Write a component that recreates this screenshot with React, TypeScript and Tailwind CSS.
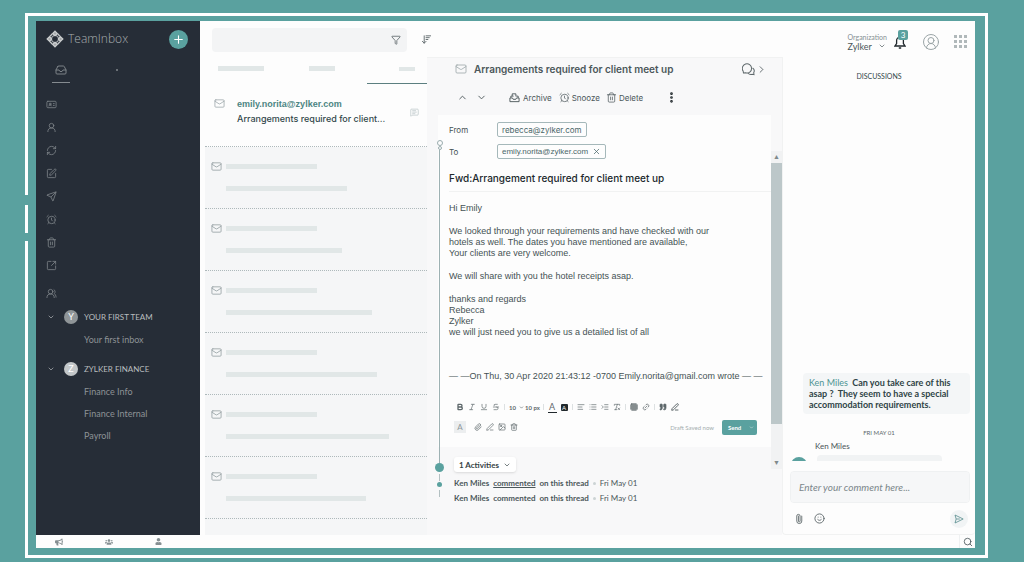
import React, { useState } from 'react';
import {
    AlignLeft, AlarmClock, Bold, ChevronDown, ChevronRight, ChevronUp, Filter, Grid3x3, Image, IndentIncrease, Italic,
    Link2, List, Mail, Paperclip, Plus, Quote, Search, Send, Smile, SquarePen, Strikethrough, Trash2, Underline,
    UserRound, UsersRound, X, IdCard, RefreshCw, RemoveFormatting, EllipsisVertical, MessageSquareText, Inbox,
    ArrowDownWideNarrow, PenLine, CircleUserRound, SquareArrowOutUpRight,
} from 'lucide-react';
import { FaBullhorn, FaUser, FaUsers } from 'react-icons/fa';

interface Team {
    letter: string;
    name: string;
    inboxes: string[];
    badgeClass: string;
}

const TEAMS: Team[] = [
    { letter: 'Y', name: 'YOUR FIRST TEAM', inboxes: ['Your first inbox'], badgeClass: 'bg-[#8f9598]' },
    { letter: 'Z', name: 'ZYLKER FINANCE', inboxes: ['Finance Info', 'Finance Internal', 'Payroll'], badgeClass: 'bg-[#c3c7c9]' },
];

const NAV_ITEMS = [
    { label: 'Contacts', icon: IdCard },
    { label: 'Assigned', icon: UserRound },
    { label: 'Shared', icon: RefreshCw },
    { label: 'Drafts', icon: SquarePen },
    { label: 'Sent', icon: Send },
    { label: 'Snoozed', icon: AlarmClock },
    { label: 'Trash', icon: Trash2 },
    { label: 'Open', icon: SquareArrowOutUpRight },
];

const MESSAGE_WIDTHS = [121, 116, 146, 151, 163, 140];

const Logo = () => (
    <svg viewBox="0 0 18 18" className="size-[18px]" fill="none" stroke="#c9cccd" strokeWidth="1.3">
        <path d="M9 1.2 11.4 3.6 9 5.6 6.6 3.6zM9 16.8 11.4 14.4 9 12.4 6.6 14.4z" fill="#a5a8aa" />
        <path d="M1.2 9 3.6 6.6 5.6 9 3.6 11.4zM16.8 9 14.4 6.6 12.4 9 14.4 11.4z" fill="#a5a8aa" />
        <path d="M4 6.2 6.2 4M11.8 4 14 6.2M4 11.8 6.2 14M11.8 14 14 11.8" />
        <circle cx="9" cy="9" r="3.6" strokeWidth="1" />
    </svg>
);

const ArchiveIcon = () => (
    <svg viewBox="0 0 12 12" className="size-[11px]" fill="none" stroke="currentColor">
        <path d="M1 6.5v4h10v-4H8.2L7.4 8H4.6l-.8-1.5zM2 6.3V4.5h3M10 6.3V4.5H8M3.5 4.3V2h4v2.8" />
    </svg>
);

const ChatIcon = () => (
    <svg viewBox="0 0 14 14" className="size-[13px]" fill="none" stroke="currentColor" strokeWidth="1.1">
        <path d="M1.6 10.8 1.2 8.6A5 5 0 1 1 4 10.6z" />
        <path d="M11.4 5.4a3.8 3.8 0 0 1 1.2 5l.3 2.2-2-.4a4.4 4.4 0 0 1-4.6-1.4" />
    </svg>
);

const Sidebar = () => (
    <aside className="w-[164px] shrink-0 bg-[#262d37] text-[#7d8388]">
        <div className="flex items-center h-9 pl-2.5 pr-3">
            <Logo />
            <span className="ml-1 flex-1 font-['Open_Sans'] font-light text-[12px] text-[#a9adb0]">TeamInbox</span>
            <button aria-label="New" className="size-[19px] rounded-full bg-[#5aa19f] text-white flex items-center justify-center">
                <Plus size={13} strokeWidth={2} />
            </button>
        </div>
        <div className="flex pl-4 h-[26px]">
            <button aria-label="Inbox" className="w-[18px] flex items-center justify-center border-b border-[#858b90]">
                <Inbox size={12} strokeWidth={2} />
            </button>
            <button aria-label="More" className="ml-[46px] flex items-center">
                <span className="size-[2px] bg-[#6a7076]" />
            </button>
        </div>
        <nav className="flex flex-col pl-2.5 pt-2.5">
            {NAV_ITEMS.map(({ label, icon: Icon }) => (
                <a key={label} href="#" aria-label={label} className="h-[23px] flex items-center">
                    <Icon size={11} strokeWidth={1.8} />
                </a>
            ))}
            <a href="#" aria-label="Teams" className="mt-[5px] h-[23px] flex items-center">
                <UsersRound size={11} strokeWidth={1.8} />
            </a>
        </nav>
        <div className="flex flex-col gap-[6px]">
            {TEAMS.map(team => (
                <div key={team.name} className="font-['Lato']">
                    <button className="flex items-center w-full h-6 pl-[11px] text-[8px] text-[#b9bdbf]">
                        <ChevronDown size={8} />
                        <span className={`ml-[9px] mr-1.5 size-[14px] rounded-full text-white text-[9px] leading-[14px] text-center ${team.badgeClass}`}>{team.letter}</span>
                        {team.name}
                    </button>
                    {team.inboxes.map(inbox => (
                        <a key={inbox} href="#" className="block pl-12 h-[22px] leading-[22px] text-[9px] text-[#8d9296]">{inbox}</a>
                    ))}
                </div>
            ))}
        </div>
    </aside>
);

const MessageList = () => (
    <section className="w-[227px] shrink-0 flex flex-col bg-[#fdfdfd]">
        <div className="flex items-center h-9 pl-3 pt-px">
            <div className="flex items-center shrink-0 w-[195px] h-6 rounded bg-[#f3f4f5] pr-1.5 text-[#5e686b]">
                <input type="text" aria-label="Search messages" className="flex-1 min-w-0 h-full bg-transparent px-2 text-[9px] outline-none" />
                <Filter size={10} strokeWidth={2} />
            </div>
            <button aria-label="Sort" className="ml-3.5 text-[#5e686b]"><ArrowDownWideNarrow size={11} /></button>
        </div>
        <div className="flex h-[27px]">
            <div className="w-[84px] pl-[18px] pt-[9px]"><div className="h-[5px] w-[46px] bg-[#e1e7e7]" /></div>
            <div className="flex-1 flex justify-center pl-1 pr-[12px] pt-[9px]"><div className="h-[5px] w-[26px] bg-[#e1e7e7]" /></div>
            <div className="w-[60px] border-b border-[#5c7f80] flex justify-center pr-px pt-[10px] pl-5"><div className="h-[4px] w-[16px] bg-[#e1e7e7]" /></div>
        </div>
        <a href="#" className="flex ml-[5px] h-[63px] border-b border-dotted border-[#aeb9bb] pl-[9px] pr-2">
            <Mail size={11} strokeWidth={1.6} className="mt-[14px] text-[#96a1a4]" />
            <div className="ml-3 flex-1 pt-[13px] whitespace-nowrap">
                <p className="font-['Liberation_Sans'] font-bold text-[9px] leading-[14px] text-[#4c8583]">emily.norita@zylker.com</p>
                <p className="font-['Inter'] font-medium text-[9px] leading-[16px] text-[#33484b]">Arrangements required for client...</p>
            </div>
            <MessageSquareText size={9} strokeWidth={1.4} className="mt-6 text-[#a3b3b4]" />
        </a>
        <ul className="ml-[5px] flex-1 bg-[#f5f6f7]">
            {MESSAGE_WIDTHS.map((width, i) => (
                <li key={i} className="flex h-[62px] border-b border-dotted border-[#aeb9bb] pl-[6px]">
                    <Mail size={11} strokeWidth={1.8} className="mt-[14px] text-[#96a1a4]" />
                    <div className="ml-1">
                        <div className="mt-[17px] h-[5px] w-[91px] bg-[#e1e7e7]" />
                        <div className="mt-[17px] h-[5px] bg-[#e1e7e7]" style={{ width }} />
                    </div>
                </li>
            ))}
        </ul>
    </section>
);

const toolClass = "w-3 h-4 flex items-center justify-center";
const Divider = () => <span className="w-[5px] flex justify-center"><span className="h-1.5 w-px bg-[#dde1e2]" /></span>;

const EditorToolbar = () => (
    <div className="mt-[17px] ml-[5px] text-[#5e686b]">
        <div className="flex items-center h-4">
            <button aria-label="Bold" className={toolClass}><Bold size={8} strokeWidth={4} /></button>
            <button aria-label="Italic" className={toolClass}><Italic size={8} /></button>
            <button aria-label="Underline" className={toolClass}><Underline size={8} /></button>
            <button aria-label="Strikethrough" className={toolClass}><Strikethrough size={8} /></button>
            <Divider />
            <div className="w-[17px] flex items-center">
                <select aria-label="Line height" className="w-[10px] ml-[2px] appearance-none bg-transparent font-['Lato'] font-bold text-[6px]"><option>10</option></select>
                <ChevronDown size={5} strokeWidth={3} />
            </div>
            <select aria-label="Font size" className="w-[17px] pl-[1px] appearance-none bg-transparent font-['Lato'] font-bold text-[6px]"><option>10 px</option></select>
            <Divider />
            <button aria-label="Text colour" className={toolClass}><span className="w-[9px] border-b border-[#20282c] font-['Lato'] text-[9px] leading-[10px]">A</span></button>
            <button aria-label="Highlight" className={toolClass}><span className="size-[7px] rounded-[1px] bg-[#20282c] text-white font-['Lato'] text-[6px] leading-[7px]">A</span></button>
            <Divider />
            <button aria-label="Align" className={toolClass}><AlignLeft size={8} /></button>
            <button aria-label="List" className={toolClass}><List size={8} /></button>
            <button aria-label="Indent" className={toolClass}><IndentIncrease size={8} /></button>
            <button aria-label="Clear format" className={toolClass}><RemoveFormatting size={8} /></button>
            <Divider />
            <button aria-label="Table" className={toolClass}><Grid3x3 size={8} strokeWidth={3} /></button>
            <button aria-label="Link" className={toolClass}><Link2 size={8} className="-rotate-45" /></button>
            <Divider />
            <button aria-label="Quote" className={toolClass}><Quote size={8} fill="currentColor" /></button>
            <button aria-label="Signature" className={toolClass}><PenLine size={8} strokeWidth={3} /></button>
        </div>
        <div className="mt-0.5 flex items-center h-5 pr-[14px]">
            <button aria-label="Format" className="size-3 bg-[#eceeef] font-['Lato'] text-[8px] leading-3 text-[#8d989b]">A</button>
            <div className="flex ml-1.5">
                <button aria-label="Attach" className={toolClass}><Paperclip size={8} /></button>
                <button aria-label="Sign" className={toolClass}><PenLine size={8} /></button>
                <button aria-label="Insert picture" className={toolClass}><Image size={8} /></button>
                <button aria-label="Discard" className={toolClass}><Trash2 size={8} /></button>
            </div>
            <span className="ml-auto mr-2 font-['Lato'] text-[6px] text-[#a4adaf]">Draft Saved now</span>
            <button className="flex items-center justify-between w-[35px] h-[15px] rounded-[2px] bg-[#5aa19f] pl-[6px] pr-[3px] font-['Lato'] font-bold text-[6px] text-white">
                Send <ChevronDown size={5} />
            </button>
        </div>
    </div>
);

const Timeline = () => (
    <div className="absolute left-2 top-[25px] w-[9px] flex flex-col items-center">
        <span className="size-[6px] rounded-full border border-[#9aacae]" />
        <span className="size-[4px] rounded-full border border-[#9aacae]" />
        <span className="w-px h-[313px] bg-[#9db1b3]" />
        <span className="size-[9px] rounded-full bg-[#5aa19f]" />
        <span className="mt-0.5 w-px h-[7px] bg-[#b3c0c2]" />
        <span className="my-px size-[5px] rounded-full bg-[#5aa19f]" />
        <span className="mt-0.5 w-px h-[7px] bg-[#b3c0c2]" />
    </div>
);

const chipClass = "flex items-center h-[15px] rounded-[2px] border border-[#a5b8ba] px-1 text-[8px] text-[#4a6769]";

const Thread = () => (
    <section className="flex-1 min-w-0 flex flex-col bg-[#f8f8f9] border-t border-[#f1f2f2] whitespace-nowrap">
        <div className="flex items-center h-[22px] pl-7 pr-[15px] text-[#5e686b]">
            <Mail size={12} strokeWidth={1.5} className="text-[#96a1a4]" />
            <h1 className="ml-[7px] flex-1 font-['Inter'] font-semibold text-[10px] text-[#4b575a]">Arrangements required for client meet up</h1>
            <ChatIcon />
            <ChevronRight size={11} className="ml-px" />
        </div>
        <div className="flex items-center h-[35px] pl-[30px] font-['Inter'] text-[8px] text-[#4b575a]">
            <button aria-label="Previous"><ChevronUp size={11} /></button>
            <button aria-label="Next" className="ml-2"><ChevronDown size={11} /></button>
            <button className="ml-[22px] flex items-center gap-[3px]"><ArchiveIcon />Archive</button>
            <button className="ml-[7px] flex items-center gap-0.5"><AlarmClock size={11} strokeWidth={1.6} />Snooze</button>
            <button className="ml-1.5 flex items-center gap-0.5"><Trash2 size={11} strokeWidth={1.6} />Delete</button>
            <button aria-label="More" className="ml-[22px] text-[#20282c]"><EllipsisVertical size={13} strokeWidth={3} /></button>
        </div>
        <div className="relative flex flex-1">
            <div className="flex-1 min-w-0">
                <article className="ml-[11px] bg-[#fdfdfd] pl-[11px] pt-[7px] pb-2.5 font-['Liberation_Sans'] text-[9px] text-[#455254]">
                    <div className="flex items-center h-[15px]">
                        <span className="w-12 font-['Inter'] text-[8px]">From</span>
                        <span className={`${chipClass} font-['Inter']`}>rebecca@zylker.com</span>
                    </div>
                    <div className="mt-[7px] flex items-center h-[15px]">
                        <span className="w-12 font-['Inter'] text-[8px]">To</span>
                        <span className={chipClass}>
                            emily.norita@zylker.com
                            <button aria-label="Remove recipient" className="ml-1"><X size={9} /></button>
                        </span>
                    </div>
                    <h2 className="mt-3 h-[14px] leading-[14px] font-['Inter'] font-medium text-[10px] text-[#20282c]">Fwd:Arrangement required for client meet up</h2>
                    <div className="mt-[6px] border-t border-[#f1f2f2]" />
                    <div className="mt-[11px] flex flex-col gap-3 leading-[11px]">
                        <p>Hi Emily</p>
                        <p>
                            We looked through your requirements and have checked with our<br />
                            hotels as well. The dates you have mentioned are available,<br />
                            Your clients are very welcome.
                        </p>
                        <p>We will share with you the hotel receipts asap.</p>
                        <p>
                            thanks and regards<br />
                            Rebecca<br />
                            Zylker<br />
                            we will just need you to give us a detailed list of all
                        </p>
                    </div>
                    <p className="mt-[33px] leading-[11px]">— —On Thu, 30 Apr 2020 21:43:12 -0700 Emily.norita@gmail.com wrote — —</p>
                    <EditorToolbar />
                </article>
                <div className="ml-[27px] mt-2.5 font-['Lato'] text-[8px] text-[#4b575a]">
                    <button className="mb-1.5 flex items-center h-[15px] gap-1 rounded-[3px] bg-white px-[5px] shadow-sm font-bold text-[#354245]">
                        1 Activities <ChevronDown size={8} />
                    </button>
                    <div className="flex flex-col gap-[5px]">
                        {['underline', ''].map((style, i) => (
                            <p key={i} className="h-[10px] leading-[10px] flex items-center gap-1 font-bold">
                                Ken Miles <span className={style}>commented</span> on this thread
                                <span className="size-[3px] rounded-full bg-[#ccd3d4]" />
                                <span className="font-normal">Fri May 01</span>
                            </p>
                        ))}
                    </div>
                </div>
            </div>
            <div className="mt-9 mb-[66px] w-[11px] flex flex-col items-center bg-[#f1f2f3]">
                <span className="h-3 flex items-center text-[7px] text-[#7f898c]">▲</span>
                <span className="w-full flex-[8] bg-[#bcc7c9]" />
                <span className="flex-[1]" />
                <span className="h-3 flex items-center text-[7px] text-[#7f898c]">▼</span>
            </div>
            <Timeline />
        </div>
    </section>
);

const TopBar = () => (
    <header className="flex items-center justify-end h-9 pr-2 pt-[5px] font-['Lato'] text-[#4b575a]">
        <button className="text-left">
            <span className="block text-[7px] leading-[9px] text-[#869093]">Organization</span>
            <span className="flex items-center gap-1.5 text-[9px] leading-[9px]">Zylker <ChevronDown size={8} /></span>
        </button>
        <button aria-label="Notifications" className="relative ml-[7px] text-[#20282c]">
            <svg viewBox="0 0 12 14" className="w-3 h-[14px]" fill="none" stroke="currentColor" strokeWidth="1.3">
                <path d="M1 11h10L9.4 8.6V5.5a3.4 3.4 0 0 0-6.8 0v3.1zM4.8 13h2.4" />
            </svg>
            <span className="absolute -top-[5px] left-1 size-[10px] rounded-[2px] bg-[#5aa19f] text-[8px] leading-[10px] text-center text-white">3</span>
        </button>
        <button aria-label="Profile" className="ml-[16px] text-[#98a2a5]"><CircleUserRound size={18} strokeWidth={1.3} /></button>
        <button aria-label="Apps" className="ml-[14px] grid grid-cols-3 gap-[2px]">
            {Array.from({ length: 9 }, (_, i) => <span key={i} className="size-[3px] bg-[#b0b8ba]" />)}
        </button>
    </header>
);

const Discussions = () => {
    const [comment, setComment] = useState('');

    return (
        <section className="w-[193px] shrink-0 flex flex-col rounded-b border-l border-b border-[#f1f2f2] bg-[#fdfdfd] font-['Lato']">
            <h2 className="mt-[14px] text-center text-[7px] leading-[10px] text-[#33484b]">DISCUSSIONS</h2>
            <p className="mt-auto ml-5 mr-[5px] rounded bg-[#f4f6f7] px-[6px] py-1 font-bold text-[9px] leading-[11px] text-[#2f4446]">
                <span className="font-normal text-[#4d9492]">Ken Miles</span>&nbsp; Can you take care of this<br />
                asap ?&nbsp; They seem to have a special<br />
                accommodation requirements.
            </p>
            <p className="mt-[14px] text-center text-[6px] leading-[10px] text-[#5e686b]">FRI MAY 01</p>
            <p className="mt-[3px] pl-8 text-[8px] leading-[10px] text-[#4b575a]">Ken Miles</p>
            <div className="mt-[4px] flex items-end h-[6px] pl-2">
                <span className="w-4 h-1 overflow-hidden"><span className="block size-4 rounded-full bg-[#5aa19f]" /></span>
                <span className="ml-2.5 w-[125px] h-[6px] rounded-t bg-[#f1f3f4]" />
            </div>
            <textarea
                aria-label="Comment"
                rows={1}
                value={comment}
                onChange={e => setComment(e.target.value)}
                placeholder="Enter your comment here..."
                className="mt-2.5 ml-[7px] mr-[5px] h-8 resize-none rounded border border-[#eff1f2] bg-[#f6f7f8] px-2 py-[10px] text-[10px] leading-[11px] italic placeholder:text-[#7b868a] outline-none"
            />
            <div className="flex items-center h-[31px] pl-[11px] pr-[7px] text-[#5e686b]">
                <button aria-label="Attach file"><Paperclip size={10} className="-rotate-45" /></button>
                <button aria-label="Emoji" className="ml-2.5"><Smile size={11} /></button>
                <button aria-label="Post comment" className="ml-auto size-[18px] rounded-full bg-[#f1f4f5] flex items-center justify-center text-[#5c8f90]">
                    <svg viewBox="0 0 12 12" className="size-[10px]" fill="none" stroke="currentColor" strokeLinejoin="round">
                        <path d="M1.2 1.2 11 6 1.2 10.8 2.6 6zM2.6 6H7" />
                    </svg>
                </button>
            </div>
        </section>
    );
};

const App: React.FC = () => (
    <div className="min-h-screen flex bg-[#5aa19f] pl-[25px] pt-[13px] pr-9 pb-1">
        <div className="relative flex-1 flex min-w-0 border-[3px] border-white pl-2 pt-[5px] pr-2.5 pb-[7px]">
            <span className="absolute -left-[3px] top-[179px] w-[3px] h-2.5 bg-[#5aa19f]" />
            <span className="absolute -left-[3px] top-[217px] w-[3px] h-2 bg-[#5aa19f]" />
            <div className="flex-1 flex flex-col min-w-0 bg-[#fdfdfd]">
                <div className="flex flex-1">
                    <Sidebar />
                    <MessageList />
                    <main className="flex-1 min-w-0 flex flex-col">
                        <TopBar />
                        <div className="flex flex-1">
                            <Thread />
                            <Discussions />
                        </div>
                    </main>
                </div>
                <footer className="flex items-center h-[13px] pl-[19px] text-[#858f92]">
                    <button aria-label="Announcements"><FaBullhorn size={8} /></button>
                    <button aria-label="Members" className="ml-[42px]"><FaUsers size={8} /></button>
                    <button aria-label="Account" className="ml-[42px]"><FaUser size={7} /></button>
                    <button aria-label="Search" className="ml-auto h-full w-4 border-l border-[#eff1f2] flex items-center justify-center text-[#4b575a]"><Search size={10} /></button>
                </footer>
            </div>
        </div>
    </div>
);

export default App;
